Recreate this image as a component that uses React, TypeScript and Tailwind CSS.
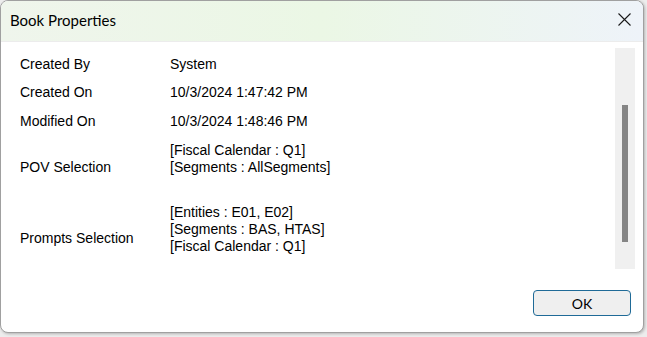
import React from "react";

// Windows-style "Book Properties" dialog

const body = { fontFamily: '"Liberation Sans", Arial, sans-serif' };
const ui = { fontFamily: 'Lato, "Noto Sans", sans-serif' };

function Row({ label, value }: { label: string; value: string }) {
  return (
    <div className="flex h-[28.5px] items-center">
      <div className="w-[150px]">{label}</div>
      <div>{value}</div>
    </div>
  );
}

export default function App() {
  return (
    <div className="h-[337px] w-[647px] bg-[#ededed]">
      <div className="flex h-[333px] w-[644px] flex-col overflow-hidden rounded-[8px] border border-[#a0a0a0] bg-white shadow-[1px_1px_3px_rgba(0,0,0,0.25)]">
        {/* title bar */}
        <div className="flex h-[41px] shrink-0 items-center justify-between border-b border-[#ececec] bg-gradient-to-r from-[#eff5ec] via-[#ebf7e5] to-[#eef3f9] pl-[9px] pr-[12px]">
          <span className="pb-[2px] text-[15px] text-black" style={ui}>
            Book Properties
          </span>
          <svg width="13" height="13" viewBox="0 0 13 13" className="mb-[3px]">
            <path d="M0.5 0.5 L12.5 12.5 M12.5 0.5 L0.5 12.5" stroke="#1a1a1a" strokeWidth="1.1" fill="none" />
          </svg>
        </div>

        {/* scrollable panel */}
        <div className="mt-[6px] flex h-[221px] text-[14px] text-black" style={body}>
          <div className="flex-1 pl-[19px] pt-[2px]">
            <Row label="Created By" value="System" />
            <Row label="Created On" value="10/3/2024 1:47:42 PM" />
            <Row label="Modified On" value="10/3/2024 1:48:46 PM" />
            <div className="mt-[6px] flex leading-[17px]">
              <div className="w-[150px] pt-[17px]">POV Selection</div>
              <div>
                <div>[Fiscal Calendar : Q1]</div>
                <div>[Segments : AllSegments]</div>
              </div>
            </div>
            <div className="mt-[28px] flex leading-[17px]">
              <div className="w-[150px] pt-[26px]">Prompts Selection</div>
              <div>
                <div>[Entities : E01, E02]</div>
                <div>[Segments : BAS, HTAS]</div>
                <div>[Fiscal Calendar : Q1]</div>
              </div>
            </div>
          </div>
          <div className="mr-[8px] w-[20px] bg-[#f0f0f0] pt-[57px]">
            <div className="mx-auto h-[137px] w-[6px] bg-[#858585]" />
          </div>
        </div>

        {/* footer */}
        <div className="flex justify-end pr-[12px] pt-[21px]">
          <button
            className="flex h-[26px] w-[98px] items-center justify-center rounded-[4px] border border-[#1f6a97] bg-[#efefef] text-[14px] text-black"
            style={ui}
          >
            OK
          </button>
        </div>
      </div>
    </div>
  );
}
